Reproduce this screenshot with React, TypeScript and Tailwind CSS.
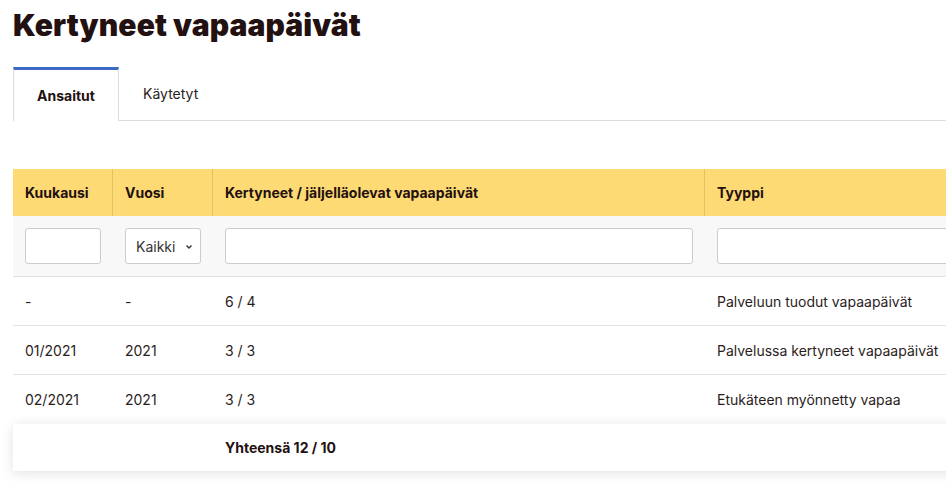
import React from "react";

const font = { fontFamily: "Inter, 'Noto Sans', sans-serif" };

export default function App() {
  const rows = [
    { m: "-", y: "-", k: "6 / 4", t: "Palveluun tuodut vapaapäivät" },
    { m: "01/2021", y: "2021", k: "3 / 3", t: "Palvelussa kertyneet vapaapäivät" },
    { m: "02/2021", y: "2021", k: "3 / 3", t: "Etukäteen myönnetty vapaa" },
  ];
  return (
    <div className="w-[946px] h-[496px] overflow-hidden bg-white text-[#2b1d1d]" style={font}>
      <div className="pl-[13px]">
        <h1 className="pt-[7px] text-[30px] leading-[36px] font-black text-[#231010] tracking-[0.1px]">
          Kertyneet vapaapäivät
        </h1>
        <div className="mt-[24px] flex h-[54px]">
          <div className="w-[106px] border-t-[3px] border-t-[#3d6bc4] border-l border-r border-[#dcdcdc] flex items-center justify-center text-[14px] font-bold text-[#231010] bg-white">
            Ansaitut
          </div>
          <div className="flex-1 border-b border-[#dcdcdc] flex items-center pl-[24px] text-[14px] text-[#2b1d1d]">
            Käytetyt
          </div>
        </div>
        <div className="mt-[48px] w-[1060px]">
          <div className="flex h-[47px] bg-[#fdda74] text-[14px] font-bold text-[#231010]">
            <div className="w-[100px] flex items-center pl-[12px] border-r border-[#e6c163]">Kuukausi</div>
            <div className="w-[100px] flex items-center pl-[12px] border-r border-[#e6c163]">Vuosi</div>
            <div className="w-[492px] flex items-center pl-[12px] border-r border-[#e6c163]">Kertyneet / jäljelläolevat vapaapäivät</div>
            <div className="flex-1 flex items-center pl-[12px]">Tyyppi</div>
          </div>
          <div className="flex h-[61px] bg-[#f8f8f8] border-b border-[#e3e3e3] items-center">
            <div className="w-[100px] pl-[12px]">
              <div className="w-[76px] h-[36px] bg-white border border-[#cccccc] rounded-[3px]" />
            </div>
            <div className="w-[100px] pl-[12px]">
              <div className="w-[76px] h-[36px] bg-white border border-[#cccccc] rounded-[3px] flex items-center pl-[10px] gap-[10px] text-[14px] text-[#333]">
                <span>Kaikki</span>
                <svg width="8" height="6" viewBox="0 0 8 6" className="mt-[1px]">
                  <path d="M1.5 1.5 L4 4 L6.5 1.5" stroke="#333" strokeWidth="1.4" fill="none" />
                </svg>
              </div>
            </div>
            <div className="w-[492px] pl-[12px] pr-[12px]">
              <div className="w-full h-[36px] bg-white border border-[#cccccc] rounded-[3px]" />
            </div>
            <div className="flex-1 pl-[12px]">
              <div className="w-full h-[36px] bg-white border border-[#cccccc] rounded-[3px]" />
            </div>
          </div>
          {rows.map((r, i) => (
            <div
              key={i}
              className={`flex h-[49px] items-center text-[14px] text-[#2b1d1d] ${i < 2 ? "border-b border-[#e3e3e3]" : ""}`}
            >
              <div className="w-[100px] pl-[12px]">{r.m}</div>
              <div className="w-[100px] pl-[12px]">{r.y}</div>
              <div className="w-[492px] pl-[12px]">{r.k}</div>
              <div className="flex-1 pl-[12px]">{r.t}</div>
            </div>
          ))}
          <div className="flex h-[47px] items-center bg-white shadow-[0_2px_12px_rgba(0,0,0,0.12)] text-[14px] font-bold text-[#231010]">
            <div className="w-[100px]" />
            <div className="w-[100px]" />
            <div className="w-[492px] pl-[12px]">Yhteensä 12 / 10</div>
            <div className="flex-1" />
          </div>
        </div>
      </div>
    </div>
  );
}
